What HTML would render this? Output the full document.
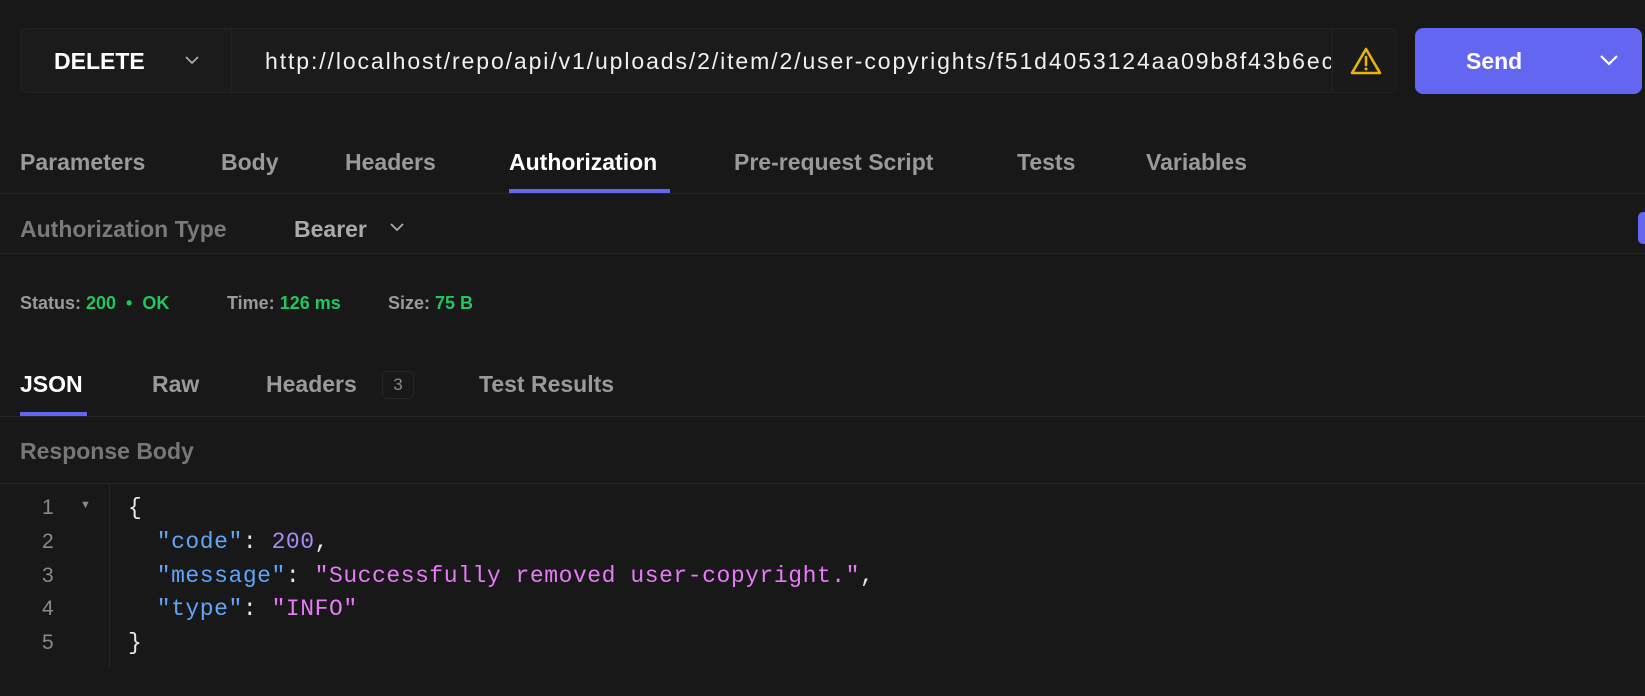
<!DOCTYPE html>
<html><head><meta charset="utf-8"><style>
*{box-sizing:border-box;margin:0;padding:0}
body{width:1645px;height:696px;background:#181818;font-family:"Liberation Sans",sans-serif;color:#9a9a9a;position:relative;overflow:hidden}
.abs{position:absolute;white-space:nowrap}
.bar{left:20px;top:28px;width:1378px;height:65px;background:#1b1b1c;border:1px solid #222;border-radius:8px}
.div{position:absolute;height:1px;background:#242424;left:0;right:0}
.tab{font-size:23px;color:#9a9a9a;line-height:30px;font-weight:bold}
.code{font-family:"Liberation Mono",monospace;font-size:23px;color:#e8e8e8;letter-spacing:0.55px;white-space:pre}
.k{color:#60a5fa}.n{color:#a78bfa}.s{color:#e879f9}
.ln{font-family:"Liberation Sans",sans-serif;font-size:21px;color:#8a8a8a}
.st{font-size:18px;line-height:22px;font-weight:bold;color:#9a9a9a}
</style></head><body>
<div class="abs bar"></div>
<div class="abs" style="left:231px;top:29px;width:1px;height:63px;background:#222"></div>
<div class="abs" style="left:54px;top:47px;font-size:23px;font-weight:bold;color:#fff;line-height:28px">DELETE</div>
<svg class="abs" style="left:183px;top:53px" width="18" height="14" viewBox="0 0 18 14"><path d="M3 4l6 6 6-6" fill="none" stroke="#aaa" stroke-width="1.8"/></svg>
<div class="abs" style="left:265px;top:46px;width:1066px;overflow:hidden;font-size:23px;letter-spacing:1.9px;color:#f0f0f0;line-height:30px">http://localhost/repo/api/v1/uploads/2/item/2/user-copyrights/f51d4053124aa09b8f43b6ec</div>
<div class="abs" style="left:1332px;top:29px;width:66px;height:63px;border-left:1px solid #232323;background:#1a1a1a;border-radius:0 8px 8px 0"></div>
<svg class="abs" style="left:1349px;top:45px" width="34" height="32" viewBox="0 0 34 32"><path d="M17 4L3 28h28z" fill="none" stroke="#eab308" stroke-width="2.6" stroke-linejoin="round"/><path d="M17 12v8" stroke="#eab308" stroke-width="2.6" stroke-linecap="round"/><circle cx="17" cy="24" r="1.5" fill="#eab308"/></svg>
<div class="abs" style="left:1415px;top:28px;width:227px;height:66px;background:#6366f1;border-radius:8px"></div>
<div class="abs" style="left:1466px;top:46px;font-size:23px;font-weight:bold;color:#fff;line-height:30px">Send</div>
<svg class="abs" style="left:1598px;top:52px" width="22" height="16" viewBox="0 0 22 16"><path d="M3 4l8 8 8-8" fill="none" stroke="#fff" stroke-width="2.2"/></svg>

<div class="abs tab" style="left:20px;top:147px">Parameters</div>
<div class="abs tab" style="left:221px;top:147px">Body</div>
<div class="abs tab" style="left:345px;top:147px">Headers</div>
<div class="abs tab" style="left:509px;top:147px;color:#fff">Authorization</div>
<div class="abs tab" style="left:734px;top:147px">Pre-request Script</div>
<div class="abs tab" style="left:1017px;top:147px">Tests</div>
<div class="abs tab" style="left:1146px;top:147px">Variables</div>
<div class="abs" style="left:509px;top:189px;width:161px;height:4px;background:#6366f1"></div>
<div class="div" style="top:193px"></div>

<div class="abs tab" style="left:20px;top:214px;color:#7a7a7a">Authorization Type</div>
<div class="abs tab" style="left:294px;top:214px;color:#aaa">Bearer</div>
<svg class="abs" style="left:388px;top:220px" width="18" height="14" viewBox="0 0 18 14"><path d="M3 4l6 6 6-6" fill="none" stroke="#aaa" stroke-width="1.8"/></svg>
<div class="abs" style="left:1638px;top:212px;width:12px;height:32px;background:#6366f1;border-radius:5px"></div>
<div class="div" style="top:253px"></div>

<div class="abs st" style="left:20px;top:292px">Status: <span style="color:#22c55e">200 &nbsp;•&nbsp; OK</span></div>
<div class="abs st" style="left:227px;top:292px">Time: <span style="color:#22c55e">126 ms</span></div>
<div class="abs st" style="left:388px;top:292px">Size: <span style="color:#22c55e">75 B</span></div>

<div class="abs tab" style="left:20px;top:369px;color:#fff">JSON</div>
<div class="abs tab" style="left:152px;top:369px">Raw</div>
<div class="abs tab" style="left:266px;top:369px">Headers</div>
<div class="abs" style="left:382px;top:371px;width:32px;height:28px;border:1px solid #262626;border-radius:5px;font-size:17px;color:#888;text-align:center;line-height:26px">3</div>
<div class="abs tab" style="left:479px;top:369px">Test Results</div>
<div class="abs" style="left:20px;top:412px;width:67px;height:4px;background:#6366f1"></div>
<div class="div" style="top:416px"></div>

<div class="abs tab" style="left:20px;top:436px;color:#777">Response Body</div>
<div class="div" style="top:483px"></div>
<div class="abs" style="left:109px;top:484px;width:1px;height:184px;background:#262626"></div>

<div class="abs ln" style="left:42px;top:496px">1</div>
<div class="abs" style="left:80px;top:499px;font-size:11px;color:#888">▼</div>
<div class="abs ln" style="left:42px;top:530px">2</div>
<div class="abs ln" style="left:42px;top:564px">3</div>
<div class="abs ln" style="left:42px;top:597px">4</div>
<div class="abs ln" style="left:42px;top:631px">5</div>
<div class="abs code" style="left:128px;top:495px">{</div>
<div class="abs code" style="left:128px;top:529px">  <span class="k">"code"</span>: <span class="n">200</span>,</div>
<div class="abs code" style="left:128px;top:563px">  <span class="k">"message"</span>: <span class="s">"Successfully removed user-copyright."</span>,</div>
<div class="abs code" style="left:128px;top:596px">  <span class="k">"type"</span>: <span class="s">"INFO"</span></div>
<div class="abs code" style="left:128px;top:630px">}</div>
</body></html>
